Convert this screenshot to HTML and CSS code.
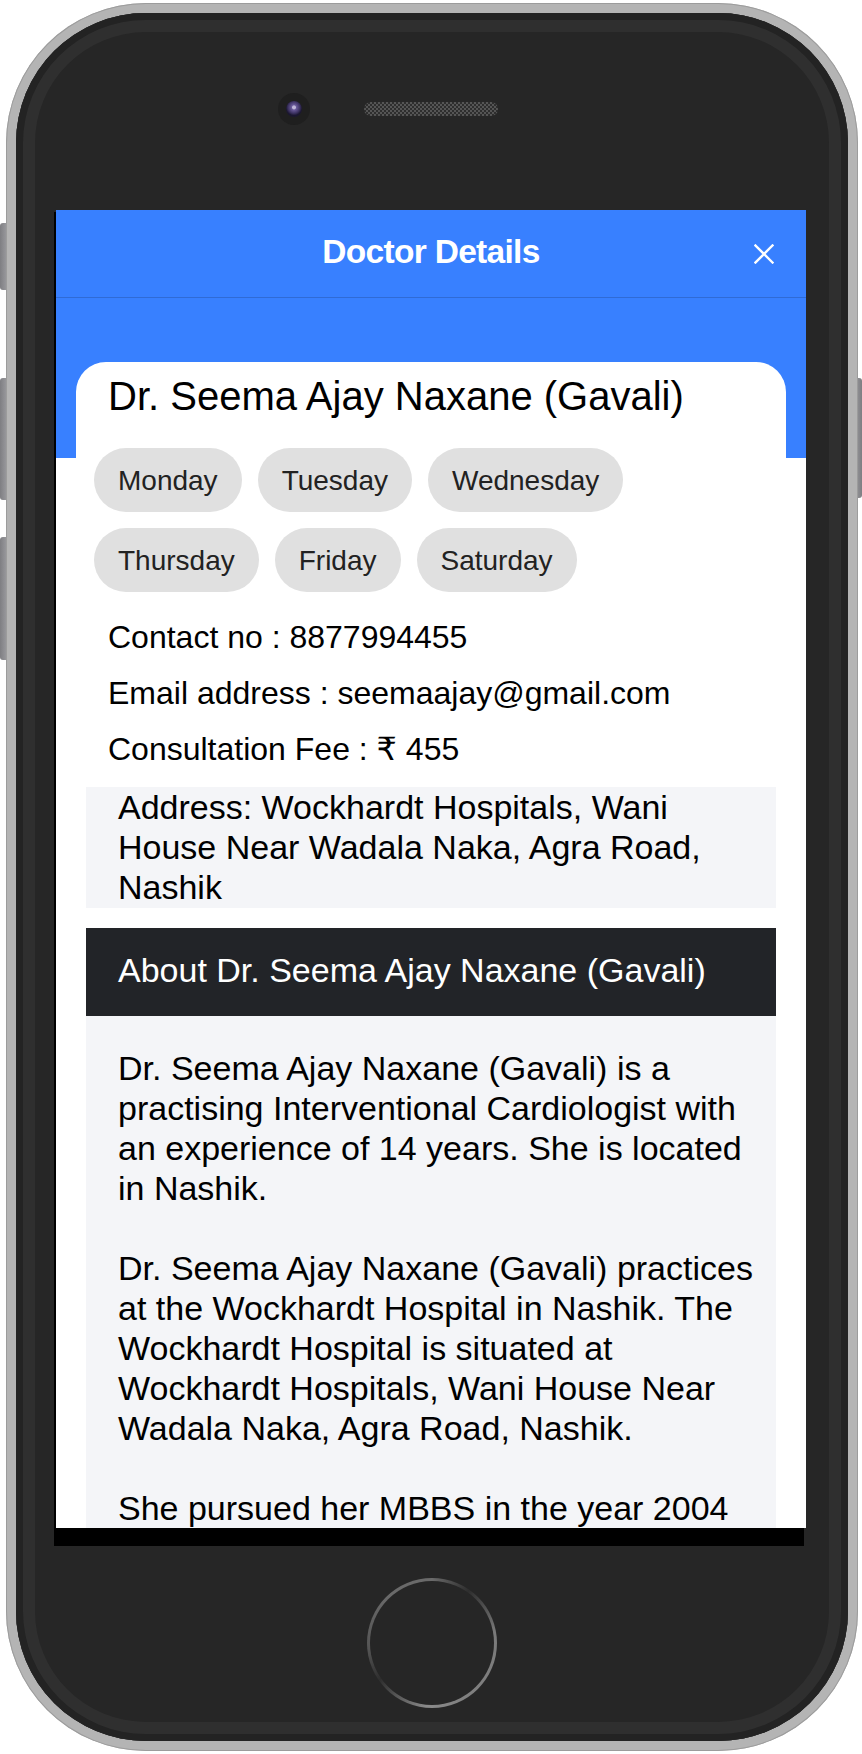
FILE: index.html
```html
<!DOCTYPE html>
<html lang="en">
<head>
<meta charset="utf-8">
<title>Doctor Details</title>
<link rel="stylesheet" href="styles.css">
</head>
<body>
<div class="device">
  <div class="side side-left">
    <span class="btn btn-mute"></span>
    <span class="btn btn-vol1"></span>
    <span class="btn btn-vol2"></span>
  </div>
  <div class="phone">
    <div class="phone-body">
      <div class="sensors">
        <span class="camera"><span class="lens"></span></span>
        <span class="speaker"></span>
      </div>
      <div class="screen-wrap">
        <div class="screen">
          <header class="toolbar">
            <span></span>
            <h1 class="title">Doctor Details</h1>
            <button class="close" aria-label="Close">
              <svg width="20" height="20" viewBox="0 0 20 20"><path d="M1.5 1.5 L18.5 18.5 M18.5 1.5 L1.5 18.5" stroke="#fff" stroke-width="2.4" stroke-linecap="square" fill="none"/></svg>
            </button>
          </header>
          <main class="content">
            <section class="card">
              <h2 class="name">Dr. Seema Ajay Naxane (Gavali)</h2>
              <div class="days">
                <span class="day">Monday</span>
                <span class="day">Tuesday</span>
                <span class="day">Wednesday</span>
                <span class="day">Thursday</span>
                <span class="day">Friday</span>
                <span class="day">Saturday</span>
              </div>
              <div class="info">
                <p class="info-line">Contact no : 8877994455</p>
                <p class="info-line">Email address : seemaajay@gmail.com</p>
                <p class="info-line">Consultation Fee : ₹ 455</p>
              </div>
              <div class="address"><span class="address-text">Address: Wockhardt Hospitals, Wani House Near Wadala Naka, Agra Road, Nashik</span></div>
              <div class="about-head">About Dr. Seema Ajay Naxane (Gavali)</div>
              <div class="about-body">Dr. Seema Ajay Naxane (Gavali) is a practising Interventional Cardiologist with an experience of 14 years. She is located in Nashik.<br><br>Dr. Seema Ajay Naxane (Gavali) practices at the Wockhardt Hospital in Nashik. The Wockhardt Hospital is situated at Wockhardt Hospitals, Wani House Near Wadala Naka, Agra Road, Nashik.<br><br>She pursued her MBBS in the year 2004</div>
            </section>
          </main>
        </div>
      </div>
      <div class="home"><span class="home-inner"></span></div>
    </div>
  </div>
  <div class="side side-right">
    <span class="btn btn-power"></span>
  </div>
</div>
</body>
</html>
```

FILE: styles.css
```css
* { box-sizing: border-box; }

html, body {
  margin: 0;
  padding: 0;
  background: #ffffff;
}

body {
  font-family: "Liberation Sans", "DejaVu Sans", Arial, sans-serif;
  width: 862px;
  height: 1754px;
  overflow: hidden;
}

.device {
  display: flex;
  width: 862px;
  height: 1754px;
}

.side {
  display: flex;
  flex-direction: column;
  position: relative;
  z-index: 0;
}

.side-left { width: 6px; }
.side-right { width: 4px; }

.btn {
  display: block;
  width: 6px;
  background: linear-gradient(to right, #7e7e82, #97979b);
  border-radius: 3px 0 0 3px;
}

.btn-mute { margin-top: 223px; height: 67px; }
.btn-vol1 { margin-top: 88px; height: 122px; }
.btn-vol2 { margin-top: 37px; height: 123px; }

.btn-power {
  margin-top: 378px;
  margin-left: -3px;
  width: 7px;
  height: 120px;
  border-radius: 0 3px 3px 0;
  background: linear-gradient(to right, #97979b, #7e7e82);
}

.phone {
  position: relative;
  z-index: 1;
  width: 852px;
  height: 1748px;
  margin-top: 3px;
  padding: 10px;
  border-radius: 140px;
  background: #b4b4b4;
  box-shadow: inset 0 0 0 1px #9c9c9c;
}

.phone-body {
  height: 100%;
  border-radius: 130px;
  background: #262626;
  box-shadow: inset 0 0 0 7px #232323, inset 0 0 0 19px #2f2f2f;
  display: flex;
  flex-direction: column;
  align-items: center;
}

.sensors {
  align-self: flex-start;
  display: flex;
  align-items: center;
  margin-top: 80px;
  margin-left: 262px;
  height: 32px;
}

.camera {
  width: 32px;
  height: 32px;
  border-radius: 50%;
  background: #1f1f1f;
  display: flex;
  align-items: center;
  justify-content: center;
}

.lens {
  width: 16px;
  height: 16px;
  border-radius: 50%;
  background: radial-gradient(circle at 50% 40%, #bfb6d8 0 1.5px, #6a5a9a 2.5px, #3b3160 6px, #1b1730 8px);
}

.speaker {
  margin-left: 54px;
  width: 134px;
  height: 14px;
  border-radius: 7px;
  background: repeating-conic-gradient(#555 0 25%, #2e2e2e 0 50%) 0 0 / 4px 4px;
}

.screen-wrap {
  align-self: flex-start;
  margin-top: 87px;
  margin-left: 38px;
  width: 750px;
  height: 1334px;
  background: #000;
}

.screen {
  width: 750px;
  height: 1318px;
  margin: -2px -2px 0 2px;
  overflow: hidden;
  background: #ffffff;
  display: flex;
  flex-direction: column;
}

.toolbar {
  flex: none;
  height: 88px;
  background: #3880ff;
  border-bottom: 1px solid #2f6bd6;
  display: grid;
  grid-template-columns: 1fr auto 1fr;
  align-items: center;
}

.title {
  margin: 0;
  padding-bottom: 4px;
  font-size: 33.5px;
  font-weight: 700;
  letter-spacing: -0.7px;
  color: #ffffff;
}

.close {
  justify-self: end;
  margin-right: 32px;
  padding: 0;
  border: 0;
  background: none;
  width: 20px;
  height: 20px;
  display: flex;
}

.content {
  flex: 1;
  background: linear-gradient(to bottom, #3880ff 0 160px, #ffffff 160px);
}

.card {
  margin: 64px 20px 0;
  padding-top: 12px;
  background: #ffffff;
  border-radius: 30px 30px 0 0;
}

.name {
  margin: 0;
  padding-left: 32px;
  font-size: 40px;
  font-weight: 400;
  color: #000;
}

.days {
  display: flex;
  flex-wrap: wrap;
  gap: 16px;
  margin: 29px 0 0 18px;
}

.day {
  height: 64px;
  padding: 2px 24px 0;
  border-radius: 32px;
  background: #e0e0e0;
  color: #222;
  font-size: 28px;
  display: flex;
  align-items: center;
}

.info { margin-top: 17px; }

.info-line {
  margin: 0;
  padding-left: 32px;
  font-size: 32px;
  line-height: 56px;
  color: #000;
}

.address {
  margin: 12px 10px 0;
  padding: 0 12px 1px 32px;
  background: #f4f5f8;
  font-size: 34px;
  line-height: 40px;
  color: #000;
}

.address-text {
  display: block;
  margin-top: -2px;
}

.about-head {
  margin: 20px 10px 0;
  padding: 22px 12px 26px 32px;
  background: #222428;
  color: #ffffff;
  font-size: 34px;
  line-height: 40px;
}

.about-body {
  margin: 0 10px;
  padding: 32px 12px 32px 32px;
  background: #f4f5f8;
  font-size: 34px;
  line-height: 40px;
  color: #000;
}

.home {
  margin-top: 32px;
  width: 130px;
  height: 130px;
  border-radius: 50%;
  padding: 3px;
  background: conic-gradient(from 0deg, #6a6a6a 0deg, #2e2e2e 35deg, #7a7a7a 80deg, #808080 150deg, #8a8a8a 185deg, #555 215deg, #2e2e2e 235deg, #555 265deg, #6a6a6a 320deg, #6a6a6a 360deg);
}

.home-inner {
  display: block;
  width: 100%;
  height: 100%;
  border-radius: 50%;
  background: #262626;
}
```
